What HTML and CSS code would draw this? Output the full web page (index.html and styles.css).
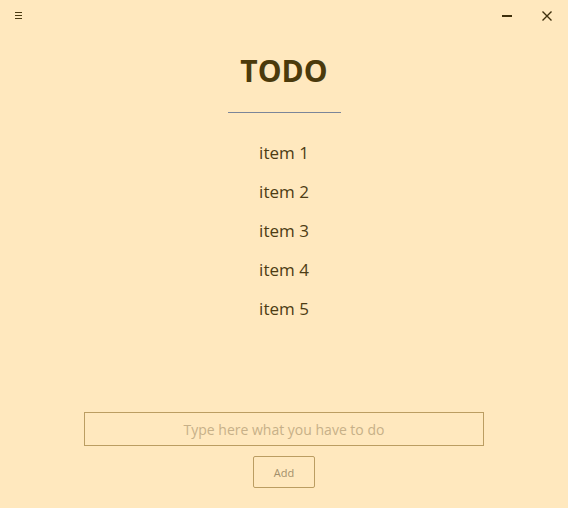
FILE: index.html
```html
<!DOCTYPE html>
<html>
<head>
<meta charset="utf-8">
<link rel="stylesheet" href="styles.css">
</head>
<body>
<div class="app">
  <div class="titlebar">
    <div class="menu">
      <svg width="8" height="7" viewBox="0 0 8 7"><rect x="0" y="0" width="7" height="1" fill="#4a3a12"/><rect x="0" y="3" width="7" height="1" fill="#4a3a12"/><rect x="0" y="6" width="7" height="1" fill="#4a3a12"/></svg>
    </div>
    <div class="controls">
      <div class="ctl">
        <svg width="10" height="10" viewBox="0 0 10 10"><rect x="0" y="4" width="10" height="2" fill="#3e2f0c"/></svg>
      </div>
      <div class="ctl">
        <svg width="10" height="10" viewBox="0 0 10 10"><path d="M0.5 0.5 L9.5 9.5 M9.5 0.5 L0.5 9.5" stroke="#3e2f0c" stroke-width="1.4"/></svg>
      </div>
    </div>
  </div>
  <main class="content">
    <h1 class="title">TODO</h1>
    <div class="divider"></div>
    <ul class="list">
      <li>item 1</li>
      <li>item 2</li>
      <li>item 3</li>
      <li>item 4</li>
      <li>item 5</li>
    </ul>
    <div class="form">
      <input class="entry" type="text" placeholder="Type here what you have to do">
      <button class="add">Add</button>
    </div>
  </main>
</div>
</body>
</html>
```
FILE: styles.css
```css
html, body {
  margin: 0;
  padding: 0;
  height: 100%;
}
body {
  background: #ffe8be;
  font-family: "Open Sans", "Noto Sans", sans-serif;
  color: #4a3a12;
}
.app {
  height: 508px;
  display: flex;
  flex-direction: column;
}
.titlebar {
  display: flex;
  justify-content: space-between;
  align-items: flex-start;
  height: 32px;
}
.menu {
  padding: 12px 0 0 15px;
  line-height: 0;
}
.controls {
  display: flex;
  gap: 30px;
  padding: 11px 16px 0 0;
}
.ctl {
  line-height: 0;
}
.content {
  flex: 1;
  display: flex;
  flex-direction: column;
  align-items: center;
}
.title {
  margin: 20px 0 0 0;
  font-size: 30px;
  font-weight: 700;
  line-height: 38px;
  color: #4b3a0c;
}
.divider {
  width: 113px;
  height: 1px;
  background: #7b8599;
  margin-top: 22px;
}
.list {
  list-style: none;
  margin: 28px 0 0 0;
  padding: 0;
  display: flex;
  flex-direction: column;
  align-items: center;
  gap: 15px;
}
.list li {
  font-size: 17px;
  line-height: 24px;
  color: #4d3c14;
}
.form {
  margin-top: auto;
  margin-bottom: 20px;
  display: flex;
  flex-direction: column;
  align-items: center;
  gap: 10px;
}
.entry {
  box-sizing: border-box;
  width: 400px;
  height: 34px;
  border: 1px solid #bb9d62;
  background: transparent;
  text-align: center;
  font-family: inherit;
  font-size: 14px;
  color: #4a3a12;
  outline: none;
  padding: 0;
}
.entry::placeholder {
  color: #c7b088;
}
.add {
  box-sizing: border-box;
  width: 62px;
  height: 32px;
  border: 1px solid #bb9d62;
  border-radius: 2px;
  background: transparent;
  font-family: inherit;
  font-size: 11px;
  color: #a38f6a;
  padding: 0;
}
```
